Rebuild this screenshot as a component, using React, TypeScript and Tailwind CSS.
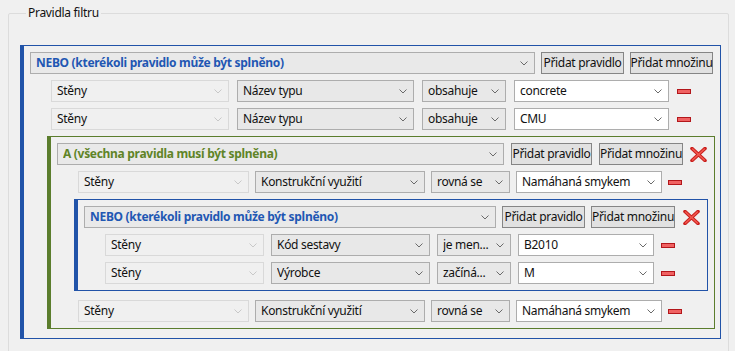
import React from "react";

// --- small drawings ---
const Chevron = ({ light }: { light?: boolean }) => (
  <svg width="8" height="5" viewBox="0 0 8 5" className="shrink-0">
    <polyline points="0.5,0.5 4,4 7.5,0.5" fill="none" stroke={light ? "#c8c8c8" : "#6a6a6a"} strokeWidth="1" />
  </svg>
);

const Minus = () => <div className="w-[14px] h-[5px] border border-[#b3171b] bg-[#f06262] shrink-0" />;

const RemoveX = () => (
  <svg width="17" height="15" viewBox="0 0 17 15" className="shrink-0">
    <path d="M2 1.5 L15 13.5 M15 1.5 L2 13.5" stroke="#c9201e" strokeWidth="3.6" strokeLinecap="round" />
    <path d="M2.6 2 L14.4 13 M14.4 2 L2.6 13" stroke="#f2584f" strokeWidth="1.6" strokeLinecap="round" />
  </svg>
);

type Kind = "off" | "list" | "value" | "head";

const kindClass: Record<Kind, string> = {
  off: "bg-[#f0f0f0] border-[#d9d9d9]",
  list: "bg-[#e8e8e8] border-[#adadad]",
  value: "bg-white border-[#adadad]",
  head: "bg-[#e9e9e9] border-[#adadad]",
};

interface ComboProps {
  text: string;
  kind: Kind;
  w?: string;
  tone?: string;
}

const Combo = ({ text, kind, w, tone }: ComboProps) => (
  <div className={`h-[22px] border ${kindClass[kind]} ${w ?? "flex-1"} flex items-center pl-[5px] pr-[6px] shrink-0`}>
    <span className={`flex-1 truncate whitespace-nowrap ${tone ?? "text-[#111]"}`}>{text}</span>
    <Chevron light={kind === "off"} />
  </div>
);

const Btn = ({ text, w }: { text: string; w: string }) => (
  <button className={`h-[22px] ${w} border border-[#858585] bg-[#e1e1e1] text-[#111] flex items-center justify-center whitespace-nowrap shrink-0`}>
    {text}
  </button>
);

interface RuleProps {
  cols: [string, string, string, string, string];
  vals: [string, string, string, string];
  gaps: string;
}

const Rule = ({ cols, vals, gaps }: RuleProps) => (
  <div className={`flex items-center pl-[21px] ${gaps}`}>
    <Combo text={vals[0]} kind="off" w={cols[0]} />
    <Combo text={vals[1]} kind="list" w={cols[1]} />
    <Combo text={vals[2]} kind="list" w={cols[2]} />
    <Combo text={vals[3]} kind="value" w={cols[3]} />
    <Minus />
  </div>
);

const OUTER: [string, string, string, string, string] = ["w-[178px]", "w-[177px]", "w-[84px]", "w-[155px]", ""];
const MID: [string, string, string, string, string] = ["w-[171px]", "w-[170px]", "w-[79px]", "w-[146px]", ""];
const INNER: [string, string, string, string, string] = ["w-[159px]", "w-[159px]", "w-[74px]", "w-[136px]", ""];

const NEBO = "NEBO (kterékoli pravidlo může být splněno)";

export default function App() {
  return (
    <div
      className="w-[735px] h-[351px] overflow-hidden bg-[#f0f0f0] text-[12px] tracking-[-0.3px] leading-[16px] text-[#111]"
      style={{ fontFamily: '"Segoe UI", "Noto Sans", sans-serif' }}
    >
      <fieldset className="mt-[5px] ml-[8px] mr-[6px] border border-[#dcdcdc] rounded-[2px] pl-[11px] pr-[7px] pt-[24px] pb-[20px]">
        <legend className="ml-[6px] px-[2px]">Pravidla filtru</legend>

        {/* --- OR group (outer) --- */}
        <div className="border-l-4 border-t border-r border-b border-[#2153a8] pl-[6px] pr-[7px] pt-[6px] pb-[9px] flex flex-col gap-[6px]">
          <div className="flex items-center gap-[6px]">
            <Combo text={NEBO} kind="head" tone="text-[#1f57b3] font-bold" />
            <Btn text="Přidat pravidlo" w="w-[83px]" />
            <Btn text="Přidat množinu" w="w-[83px]" />
          </div>
          <Rule cols={OUTER} vals={["Stěny", "Název typu", "obsahuje", "concrete"]} gaps="gap-[8px]" />
          <Rule cols={OUTER} vals={["Stěny", "Název typu", "obsahuje", "CMU"]} gaps="gap-[8px]" />

          {/* --- AND group --- */}
          <div className="ml-[17px] -mr-[2px] border-l-4 border-t border-r border-b border-[#5b7d2d] pl-[6px] pr-[7px] pt-[6px] pb-[6px] flex flex-col gap-[6px]">
            <div className="flex items-center gap-[7px]">
              <Combo text="A (všechna pravidla musí být splněna)" kind="head" tone="text-[#5f8427] font-bold" />
              <Btn text="Přidat pravidlo" w="w-[81px]" />
              <Btn text="Přidat množinu" w="w-[84px]" />
              <RemoveX />
            </div>
            <Rule cols={MID} vals={["Stěny", "Konstrukční využití", "rovná se", "Namáhaná smykem"]} gaps="gap-[6px]" />

            {/* --- OR group (inner) --- */}
            <div className="ml-[17px] -mr-[1px] border-l-4 border-t border-r border-b border-[#2153a8] pl-[6px] pr-[7px] pt-[6px] pb-[6px] flex flex-col gap-[6px]">
              <div className="flex items-center gap-[6px]">
                <Combo text={NEBO} kind="head" tone="text-[#1f57b3] font-bold" />
                <Btn text="Přidat pravidlo" w="w-[83px]" />
                <Btn text="Přidat množinu" w="w-[84px]" />
                <div className="ml-[2px]">
                  <RemoveX />
                </div>
              </div>
              <Rule cols={INNER} vals={["Stěny", "Kód sestavy", "je men...", "B2010"]} gaps="gap-[7px]" />
              <Rule cols={INNER} vals={["Stěny", "Výrobce", "začíná...", "M"]} gaps="gap-[7px]" />
            </div>

            <div className="mt-[3px]">
              <Rule cols={MID} vals={["Stěny", "Konstrukční využití", "rovná se", "Namáhaná smykem"]} gaps="gap-[6px]" />
            </div>
          </div>
        </div>
      </fieldset>
    </div>
  );
}
